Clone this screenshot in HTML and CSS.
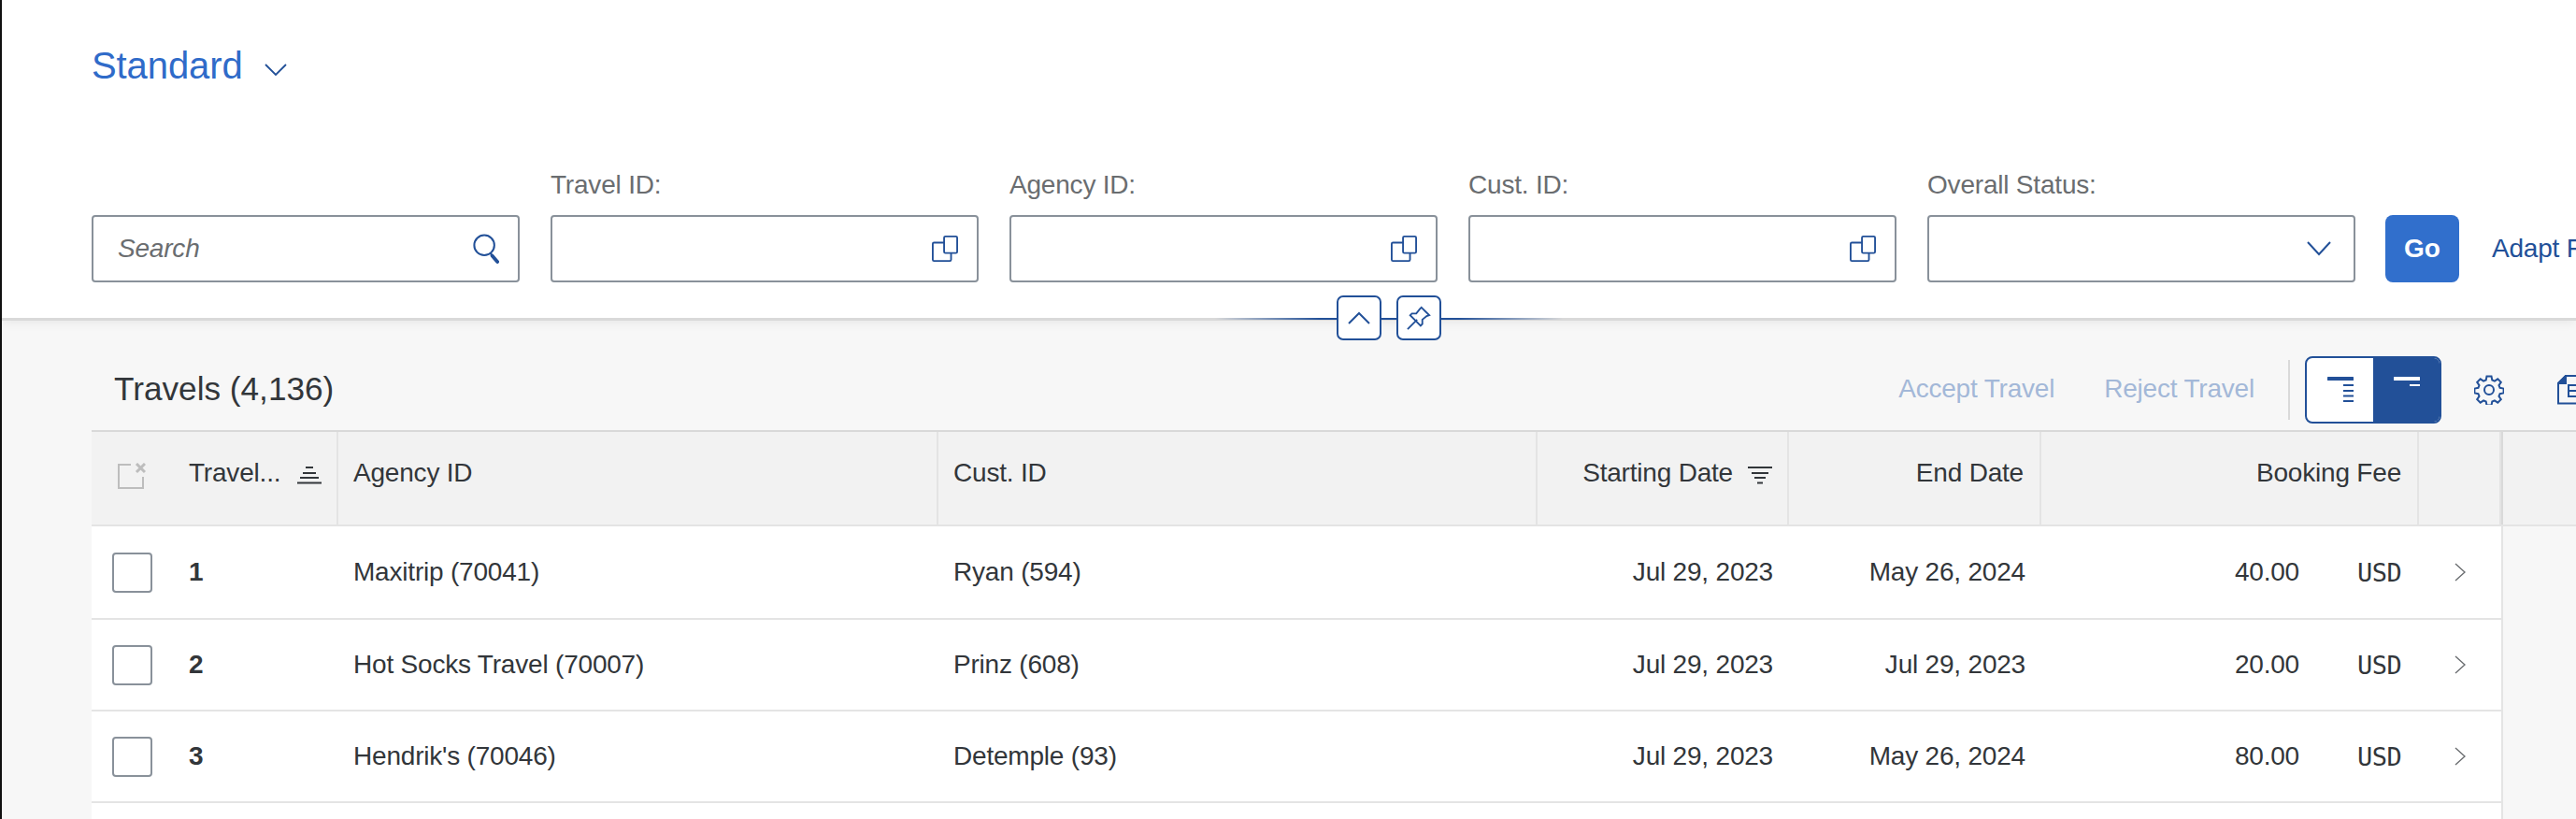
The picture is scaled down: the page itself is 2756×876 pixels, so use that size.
FILE: index.html
```html
<!DOCTYPE html>
<html lang="en">
<head>
<meta charset="utf-8">
<title>Travels</title>
<link rel="stylesheet" href="styles.css">
</head>
<body>
<header class="filterbar">
  <div class="variant">
    <span class="variant-name">Standard</span>
    <svg class="variant-chevron" viewBox="0 0 24 14"><path d="M1 1l11 11L23 1"/></svg>
  </div>
  <div class="filters">
    <div class="field">
      <div class="input search">
        <span class="placeholder">Search</span>
        <svg class="search-icon" viewBox="0 0 30 36"><circle cx="13" cy="14" r="11.500"/><path d="M20 23l2 3"/><path class="thick" d="M22 26l6 7"/></svg>
      </div>
    </div>
    <div class="field">
      <label class="label">Travel ID:</label>
      <div class="input"><svg class="copy-icon" viewBox="0 0 30 30"><rect x="14" y="1" width="15" height="19" rx="1.500"/><path d="M14 8H2.500A1.500 1.500 0 0 0 1 9.500V27.500A1.500 1.500 0 0 0 2.500 29H20.500A1.500 1.500 0 0 0 22 27.500V20"/></svg></div>
    </div>
    <div class="field">
      <label class="label">Agency ID:</label>
      <div class="input"><svg class="copy-icon" viewBox="0 0 30 30"><rect x="14" y="1" width="15" height="19" rx="1.500"/><path d="M14 8H2.500A1.500 1.500 0 0 0 1 9.500V27.500A1.500 1.500 0 0 0 2.500 29H20.500A1.500 1.500 0 0 0 22 27.500V20"/></svg></div>
    </div>
    <div class="field">
      <label class="label">Cust. ID:</label>
      <div class="input"><svg class="copy-icon" viewBox="0 0 30 30"><rect x="14" y="1" width="15" height="19" rx="1.500"/><path d="M14 8H2.500A1.500 1.500 0 0 0 1 9.500V27.500A1.500 1.500 0 0 0 2.500 29H20.500A1.500 1.500 0 0 0 22 27.500V20"/></svg></div>
    </div>
    <div class="field">
      <label class="label">Overall Status:</label>
      <div class="input"><svg class="select-chevron" viewBox="0 0 26 16"><path d="M1 1l12 13L25 1"/></svg></div>
    </div>
    <button class="go">Go</button>
    <span class="adapt">Adapt Filters</span>
  </div>
</header>

<div class="divider">
  <div class="divider-line"></div>
  <button class="divider-btn"><svg viewBox="0 0 24 14"><path d="M1 13L12 2l11 11"/></svg></button>
  <button class="divider-btn"><svg class="pin" viewBox="0 0 28 28"><path d="M1 27l11-11"/><path d="M17 2l9 9-3 1-5 4 0 5-2 2-12-12 2-2 5 0 4-5z"/></svg></button>
</div>

<main class="content">
  <div class="toolbar">
    <h1 class="title">Travels (4,136)</h1>
    <div class="actions">
      <span class="action">Accept Travel</span>
      <span class="action">Reject Travel</span>
      <span class="sep"></span>
      <div class="segmented">
        <span class="seg">
          <svg viewBox="0 0 28 28"><path class="bar" d="M1 2h26"/><path d="M17 9h11M17 15h11M17 20.500h11M17 26h11"/></svg>
        </span>
        <span class="seg seg-active">
          <svg viewBox="0 0 28 28"><path class="bar" d="M1 2h26"/><path d="M17 9h11"/></svg>
        </span>
      </div>
      <svg class="gear" viewBox="0 0 32 32"><circle cx="16" cy="16" r="5"/><path d="M13.500 1.500h5l.8 4 2.600 1.100 3.400-2.300 3.500 3.500-2.300 3.400 1.100 2.600 4 .8v4.800l-4 .8-1.100 2.600 2.300 3.400-3.500 3.500-3.400-2.300-2.600 1.100-.8 4h-5l-.8-4-2.600-1.100-3.400 2.300-3.500-3.500 2.300-3.400-1.100-2.600-4-.8v-4.800l4-.8 1.100-2.600-2.300-3.400 3.500-3.500 3.400 2.300 2.600-1.100z"/></svg>
      <svg class="export" viewBox="0 0 40 32"><path d="M40 1H9L1 9v21.500h39"/><path class="fill" d="M9 1v8H1z"/><path d="M12 11h28v12H12zM24 11v12M12 17h28"/></svg>
    </div>
  </div>

  <div class="head-row">
    <div class="table-head grid">
      <div class="th th-select"><svg class="clear-icon" viewBox="0 0 30 28"><path d="M14 2H1v25h26V15"/><path class="x" d="M20 1l9 9M29 1l-9 9"/></svg></div>
      <div class="th th-line"><span>Travel...</span><svg class="sort-icon" viewBox="0 0 26 20"><path d="M9 2h8M6 8h14M3 13h20M0 18.500h26"/></svg></div>
      <div class="th th-line">Agency ID</div>
      <div class="th th-line">Cust. ID</div>
      <div class="th th-line th-end th-icon"><span>Starting Date</span><svg class="filter-icon" viewBox="0 0 26 20"><path d="M0 2h26M4 8h18M7 13h12M10 18.500h6"/></svg></div>
      <div class="th th-line th-end">End Date</div>
      <div class="th th-line th-end">Booking Fee</div>
      <div class="th th-line"></div>
    </div>
  </div>

  <div class="row first grid">
    <div class="td"><span class="check"></span></div>
    <div class="td id">1</div>
    <div class="td">Maxitrip (70041)</div>
    <div class="td">Ryan (594)</div>
    <div class="td end">Jul 29, 2023</div>
    <div class="td end">May 26, 2024</div>
    <div class="td end fee"><span class="amount">40.00</span><span class="cur">USD</span></div>
    <div class="td nav"><svg viewBox="0 0 12 20"><path d="M1 1l10 9-10 9"/></svg></div>
  </div>
  <div class="row grid">
    <div class="td"><span class="check"></span></div>
    <div class="td id">2</div>
    <div class="td">Hot Socks Travel (70007)</div>
    <div class="td">Prinz (608)</div>
    <div class="td end">Jul 29, 2023</div>
    <div class="td end">Jul 29, 2023</div>
    <div class="td end fee"><span class="amount">20.00</span><span class="cur">USD</span></div>
    <div class="td nav"><svg viewBox="0 0 12 20"><path d="M1 1l10 9-10 9"/></svg></div>
  </div>
  <div class="row grid">
    <div class="td"><span class="check"></span></div>
    <div class="td id">3</div>
    <div class="td">Hendrik's (70046)</div>
    <div class="td">Detemple (93)</div>
    <div class="td end">Jul 29, 2023</div>
    <div class="td end">May 26, 2024</div>
    <div class="td end fee"><span class="amount">80.00</span><span class="cur">USD</span></div>
    <div class="td nav"><svg viewBox="0 0 12 20"><path d="M1 1l10 9-10 9"/></svg></div>
  </div>
  <div class="row last grid"></div>
</main>
</body>
</html>
```

FILE: styles.css
```css
* { box-sizing: border-box; }
html, body { margin: 0; height: 100%; }
body {
  width: 2756px;
  height: 876px;
  overflow: hidden;
  background: #f7f7f7;
  border-left: 2px solid #111;
  color: #32363a;
  font-family: "Liberation Sans", Arial, sans-serif;
  font-size: 28px;
  letter-spacing: -0.2px;
  display: flex;
  flex-direction: column;
}
svg { display: block; fill: none; stroke: #225098; stroke-width: 2; }

.filterbar {
  position: relative;
  z-index: 1;
  height: 340px;
  flex: none;
  background: #fff;
  padding: 47px 0 0 96px;
  box-shadow: 0 3px 0 #d9d9d9, 0 6px 10px rgba(0, 0, 0, .06);
}
.variant { display: flex; align-items: center; height: 46px; gap: 23px; }
.variant-name { font-size: 40px; color: #2f6bc9; line-height: 46px; letter-spacing: -0.1px; }
.variant-chevron { width: 24px; height: 14px; margin-top: 9px; stroke-width: 1.800; }

.filters { display: flex; align-items: flex-end; gap: 33px; margin-top: 85px; width: 2658px; overflow: hidden; }
.field { width: 458px; flex: none; }
.label { display: block; color: #6a6d70; line-height: 40px; margin-bottom: 12px; white-space: nowrap; }
.input {
  height: 72px;
  background: #fff;
  border: 2px solid #89919a;
  border-radius: 4px;
  display: flex;
  align-items: center;
  justify-content: flex-end;
  padding-right: 20px;
}
.search { justify-content: space-between; padding-left: 26px; padding-right: 20px; }
.placeholder { font-style: italic; color: #6a6d70; }
.search-icon { width: 28px; height: 34px; stroke-width: 2.200; }
.search-icon .thick { stroke-width: 4; stroke-linecap: round; }
.copy-icon { width: 28px; height: 28px; stroke-width: 2; }
.select-chevron { width: 26px; height: 16px; margin-right: 4px; stroke-width: 2; }
.go {
  width: 79px;
  height: 72px;
  flex: none;
  margin-left: -1px;
  background: #316fcc;
  border: 0;
  border-radius: 8px;
  color: #fff;
  font: bold 28px "Liberation Sans", Arial, sans-serif;
}
.adapt { color: #225098; line-height: 72px; white-space: nowrap; margin-left: 2px; }

.divider {
  height: 0;
  flex: none;
  position: relative;
  z-index: 2;
  display: flex;
  gap: 16px;
  padding-left: 1428px;
}
.divider-line {
  position: absolute;
  top: 0;
  left: 1298px;
  width: 372px;
  height: 2px;
  background: linear-gradient(90deg, rgba(34, 80, 152, 0), #225098 30%, #225098 70%, rgba(34, 80, 152, 0));
}
.divider-btn {
  position: relative;
  width: 48px;
  height: 48px;
  margin-top: -24px;
  padding: 0;
  background: #fff;
  border: 2px solid #225098;
  border-radius: 7px;
  display: flex;
  align-items: center;
  justify-content: center;
  flex: none;
}
.divider-btn svg { width: 24px; height: 14px; stroke-width: 2; }
.divider-btn .pin { width: 26px; height: 26px; }

.content { flex: 1; min-height: 0; display: flex; flex-direction: column; }

.toolbar {
  height: 120px;
  flex: none;
  margin-left: 96px;
  padding: 41px 0 7px 24px;
  display: flex;
  justify-content: space-between;
  align-items: center;
  overflow: hidden;
}
.title { margin: -3px 0 0; font-size: 35.200px; font-weight: 400; line-height: 72px; white-space: nowrap; letter-spacing: 0; }
.actions { display: flex; align-items: center; flex: none; margin-right: -20px; }
.action { color: #a3b8d8; white-space: nowrap; margin: -3px 53px 0 0; }
.action + .action { margin-right: 36px; }
.sep { width: 2px; height: 64px; background: #d9d9d9; margin-right: 16px; }
.segmented {
  width: 146px;
  height: 72px;
  display: flex;
  border: 2px solid #225098;
  border-radius: 8px;
  overflow: hidden;
  background: #fff;
}
.seg { flex: 1; display: flex; justify-content: center; padding-top: 20px; }
.seg svg { width: 28px; height: 28px; }
.seg .bar { stroke-width: 4; stroke-linecap: round; }
.seg-active { background: #225098; }
.seg-active svg { stroke: #fff; }
.gear { width: 32px; height: 32px; margin-left: 35px; }
.export { width: 40px; height: 32px; margin-left: 57px; }
.export .fill { fill: #225098; }

.head-row {
  height: 103px;
  flex: none;
  margin-left: 96px;
  background: #f2f2f2;
  border-top: 2px solid #d9d9d9;
  border-bottom: 2px solid #e4e4e4;
}
.grid {
  display: grid;
  grid-template-columns: 88px 176px 642px 641px 269px 270px 404px 88px;
  width: 2580px;
  margin-left: 96px;
}
.table-head { height: 99px; margin-left: 0; border-right: 2px solid #d9d9d9; }
.th {
  display: flex;
  align-items: flex-start;
  padding: 26px 16px 0;
  line-height: 36px;
  white-space: nowrap;
}
.th-select { padding: 33px 0 0 28px; }
.th-line { border-right: 2px solid #e4e4e4; justify-content: space-between; }
.th-end { justify-content: flex-end; padding-right: 17px; }
.th-icon { gap: 16px; padding-right: 16px; }
.clear-icon { width: 30px; height: 28px; stroke: #bdbdbd; }
.clear-icon .x { stroke-width: 3; }
.sort-icon, .filter-icon { width: 26px; height: 20px; margin-top: 10px; stroke: #32363a; }

.row {
  height: 98px;
  flex: none;
  background: #fff;
  border-bottom: 2px solid #e4e4e4;
  border-right: 2px solid #e4e4e4;
}
.row.first { height: 100px; }
.row.last { height: 40px; border-bottom: 0; }
.td { display: flex; align-items: center; padding: 0 16px; white-space: nowrap; }
.end { justify-content: flex-end; padding-right: 17px; }
.id { font-weight: bold; }
.check {
  width: 43px;
  height: 43px;
  margin-left: 6px;
  background: #fff;
  border: 2px solid #89919a;
  border-radius: 4px;
  flex: none;
}
.fee { padding-right: 16px; }
.amount { margin-right: 62px; }
.cur { font-family: "DejaVu Sans Mono", monospace; width: 50px; letter-spacing: -0.5px; font-size: 27px; }
.nav { justify-content: center; padding: 0; }
.nav svg { width: 12px; height: 20px; stroke: #6a6d70; stroke-width: 1.400; }
```
